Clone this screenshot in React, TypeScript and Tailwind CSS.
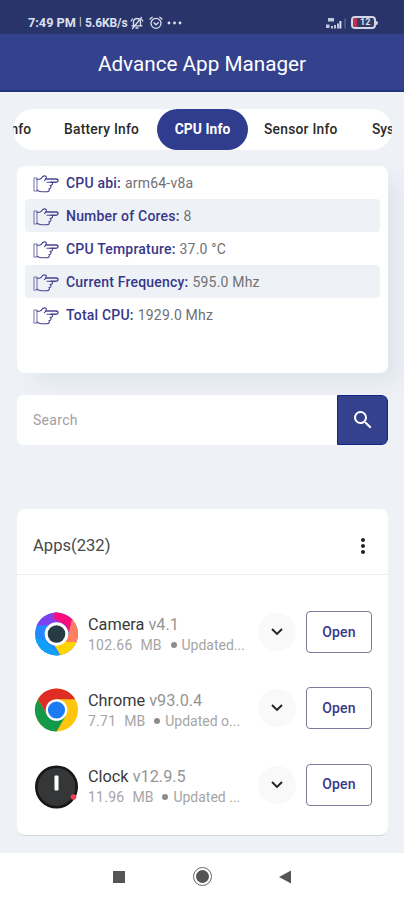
import { MdSearch, MdMoreVert } from "react-icons/md";

const stats = [
  { label: "CPU abi:", value: "arm64-v8a" },
  { label: "Number of Cores:", value: "8" },
  { label: "CPU Temprature:", value: "37.0 °C" },
  { label: "Current Frequency:", value: "595.0 Mhz" },
  { label: "Total CPU:", value: "1929.0 Mhz" },
];

const CameraIcon = () => (
  <svg viewBox="0 0 44 44" className="h-11 w-11 shrink-0">
    <defs>
      <clipPath id="camera-clip">
        <circle cx="22.5" cy="22" r="21.5" />
      </clipPath>
    </defs>
    <g clipPath="url(#camera-clip)">
      <rect width="44" height="44" fill="#2489ff" />
      <path d="M0 14L9 0H24L27 12L12 13Z" fill="#8140f0" />
      <path d="M20 0H42L36 22L31 13L20 7Z" fill="#fb0d80" />
      <path d="M38 7L44 4V31H25L34 24Z" fill="#ff8060" />
      <path d="M24 30H44V44H27L19 31Z" fill="#ffd500" />
      <path d="M0 24L12 30L27 44H0Z" fill="#10a0f8" />
    </g>
    <circle cx="22.5" cy="22" r="11.8" fill="#fff" />
    <circle cx="22.5" cy="22" r="8.8" fill="#263b43" />
  </svg>
);

const ChromeIcon = () => (
  <svg viewBox="0 0 44 44" className="h-11 w-11 shrink-0">
    <g transform="translate(0.5 0)">
      <circle cx="22" cy="22" r="21.5" fill="#fdc50c" />
      <path d="M3.4 11.2A21.5 21.5 0 0 1 40.6 11.2H22L12.7 27.4Z" fill="#df2c25" />
      <path d="M3.4 11.2A21.5 21.5 0 0 0 22 43.5L31.4 27.4H12.7Z" fill="#14994a" />
      <circle cx="22" cy="22" r="10.8" fill="#fff" />
      <circle cx="22" cy="22" r="8.6" fill="#1c7bf2" />
    </g>
  </svg>
);

const ClockIcon = () => (
  <svg viewBox="0 0 44 44" className="h-11 w-11 shrink-0">
    <circle cx="22.5" cy="22" r="20.2" fill="#353637" stroke="#171718" strokeWidth="2.6" />
    <rect x="20.5" y="10.5" width="4" height="15" rx="0.8" fill="#fff" />
    <circle cx="39.5" cy="32" r="2.8" fill="#fa3852" />
  </svg>
);

const apps = [
  { name: "Camera", version: "v4.1", size: "102.66", updated: "Updated...", icon: <CameraIcon /> },
  { name: "Chrome", version: "v93.0.4", size: "7.71", updated: "Updated o...", icon: <ChromeIcon /> },
  { name: "Clock", version: "v12.9.5", size: "11.96", updated: "Updated ...", icon: <ClockIcon /> },
];

const PointingHand = () => (
  <svg viewBox="0 0 26 18" className="h-[18px] w-[26px] shrink-0" fill="none" stroke="#484491" strokeWidth="1.1" strokeLinejoin="round" strokeLinecap="round">
    <path d="M1 3H4V16H1Z" strokeOpacity="0.7" />
    <path d="M4 4.2H6.5Q8.2 3.9 9.5 1.7Q11.3 0.3 13 1.3Q13.8 2 12.8 3.8" />
    <path d="M12.8 3.9H23Q25.4 4.2 24.9 5.9Q24.4 7.2 22.8 7.3H18" strokeWidth="1.5" />
    <path d="M12.8 4L11.5 5.6M14 7.3H18.6Q20.3 8.4 19 9.8Q18.7 10.5 17 10.6Q18.8 11.8 17.6 12.9Q17.2 13.6 15.8 13.7Q17.1 14.8 15.8 16Q15.1 16.7 13.7 16.7H8.5Q6 16.4 4 15.2" />
  </svg>
);

const StatusBar = () => (
  <div className="flex h-[34px] items-center bg-[#29346b] pr-[26px] pl-7 pt-[11px] text-[#dde0ee]">
    <span className="w-[51px] whitespace-nowrap text-[12.7px] font-bold">7:49 PM</span>
    <span className="w-[6px] text-[11px]">|</span>
    <span className="w-[45px] whitespace-nowrap text-[12px] font-bold tracking-[-0.1px]">5.6KB/s</span>
    <svg viewBox="0 0 14 14" className="h-[14px] w-[14px]" fill="none" stroke="currentColor" strokeWidth="1.3" strokeLinecap="round">
      <path d="M3.5 9.8V5.5Q4 2.5 7 2.5Q10 2.5 10.5 5.5V9.8M2 9.8H12M6 12H8M2.5 12.5L11.5 1.5M1.2 5L2.4 3M12.8 5L11.8 3.5" />
    </svg>
    <svg viewBox="0 0 14 14" className="ml-[5px] h-[14px] w-[14px]" fill="none" stroke="currentColor" strokeWidth="1.3" strokeLinecap="round">
      <circle cx="7" cy="7.3" r="5" />
      <path d="M1 3L3.2 1.2M13 3L10.8 1.2M5 6.8L7 8.8L9.3 6.8" />
    </svg>
    <svg viewBox="0 0 16 4" className="ml-[4px] h-1 w-4" fill="currentColor">
      <circle cx="2" cy="2" r="1.4" />
      <circle cx="7.5" cy="2" r="1.4" />
      <circle cx="13" cy="2" r="1.4" />
    </svg>
    <svg viewBox="0 0 22 14" className="ml-auto h-[14px] w-[22px]" fill="currentColor">
      <path d="M3 2H9V5.5H3ZM1 8.5H4.5V12H1ZM6 10H8V12.5H6ZM9 9H11V12.5H9ZM12 7.5H14V12.5H12Z" opacity="0.85" />
      <rect x="14.4" y="5" width="2" height="7.5" />
      <rect x="19" y="2.5" width="2" height="10" opacity="0.2" />
    </svg>
    <div className="ml-[4px] flex items-center">
      <div className="flex h-[13px] w-[25px] items-center overflow-hidden rounded-[4px] border-2 border-[#d3d6e6] bg-[#343c64]">
        <div className="h-full w-[4px] bg-[#c22f52]" />
        <span className="pl-[3px] text-[9px] leading-none font-bold">12</span>
      </div>
      <div className="h-1 w-[2px] rounded-r bg-[#d3d6e6]" />
    </div>
  </div>
);

const Tabs = () => (
  <div className="mr-3 ml-[13px] flex h-[41px] items-center overflow-hidden rounded-full bg-white text-[13.8px] font-medium whitespace-nowrap text-[#2a2a2a]">
    <div className="flex w-[18px] shrink-0 justify-end">
      <span>Info</span>
    </div>
    <span className="ml-[33px] w-[93px] shrink-0 tracking-[0.25px]">Battery Info</span>
    <div className="flex h-full w-[91px] shrink-0 items-center justify-center rounded-full bg-[#303c8d] font-bold tracking-[0.1px] text-white">
      CPU Info
    </div>
    <span className="ml-4 w-[108px] shrink-0 tracking-[0.25px]">Sensor Info</span>
    <span className="shrink-0">System</span>
  </div>
);

export default function App() {
  return (
    <div className="flex h-[900px] w-[404px] flex-col overflow-hidden bg-[#eef2f7] font-['Roboto',sans-serif]">
      <StatusBar />
      <header className="flex h-[58px] items-center justify-center border-b-2 border-[#213580] bg-[#34428e] pt-[5px] text-[20.7px] text-white">
        Advance App Manager
      </header>

      <main className="flex flex-1 flex-col pt-[17px]">
        <Tabs />

        <section className="mr-4 ml-[17px] mt-4 h-[207px] rounded-lg bg-white px-2 shadow-[14px_12px_22px_-2px_rgba(60,65,80,0.07)]">
          {stats.map((s) => (
            <div key={s.label} className="flex h-[33px] items-center rounded-sm pt-[2px] pl-2 text-[14px] tracking-[0.2px] even:bg-[#eef2f7]">
              <PointingHand />
              <span className="ml-[7px] font-medium text-[#38378a]">{s.label}</span>
              <span className="ml-1 text-[#707074]">{s.value}</span>
            </div>
          ))}
        </section>

        <div className="mr-4 ml-[17px] mt-[22px] flex h-[50px] overflow-hidden rounded-md bg-white">
          <div className="flex flex-1 items-center pl-4 text-[14px] tracking-[0.3px] text-[#a0a0a0]">Search</div>
          <button className="flex w-[51px] items-center justify-center rounded-r-md border border-[#152583] bg-[#34418d]">
            <MdSearch className="h-6 w-6 text-white" />
          </button>
        </div>

        <section className="mr-4 ml-[17px] mt-16 h-[327px] rounded-lg border-b border-[#d5d7dc] bg-white">
          <div className="flex h-[66px] items-center justify-between border-b border-[#ececee] pt-[10px] pr-[13px] pl-4 text-[16.6px] text-[#484848]">
            Apps(232)
            <MdMoreVert className="mb-[2px] h-6 w-6 text-[#222]" />
          </div>
          <div className="flex flex-col pt-[19px]">
            {apps.map((app) => (
              <div key={app.name} className="flex h-[76.3px] items-center pr-4 pl-[17px]">
                <div className="pt-1">{app.icon}</div>
                <div className="ml-[10px] w-[170px] pt-[5px] whitespace-nowrap">
                  <div className="text-[16.3px] leading-5 text-[#3a3a3a]">
                    {app.name} <span className="text-[#959595]">{app.version}</span>
                  </div>
                  <div className="flex items-center text-[14px] leading-5 text-[#a5a5a5]">
                    <span className="tracking-[0.25px]">{app.size}</span>
                    <span className="ml-2">MB</span>
                    <span className="mr-[5px] ml-[9px] h-[6px] w-[6px] rounded-full bg-[#8c8c8c]" />
                    <span>{app.updated}</span>
                  </div>
                </div>
                <div className="flex h-[38px] w-[38px] shrink-0 items-center justify-center rounded-full bg-[#f9f9f9]">
                  <svg viewBox="0 0 12 8" className="h-2 w-3" fill="none" stroke="#222" strokeWidth="1.9">
                    <path d="M1 1L6 6L11 1" />
                  </svg>
                </div>
                <button className="ml-auto h-[42px] w-[66px] shrink-0 rounded border border-[#7b7b9e] text-[14px] font-medium tracking-[0.2px] text-[#38378a]">
                  Open
                </button>
              </div>
            ))}
          </div>
        </section>
      </main>

      <nav className="flex h-[47px] items-center bg-white pl-[113px]">
        <div className="h-3 w-3 bg-[#555]" />
        <div className="ml-[68px] flex h-[19px] w-[19px] items-center justify-center rounded-full border border-[#666]">
          <div className="h-[13px] w-[13px] rounded-full bg-[#555]" />
        </div>
        <svg viewBox="0 0 12 14" className="ml-[67px] h-[14px] w-3">
          <path d="M0 7L12 0.5V13.5Z" fill="#555" />
        </svg>
      </nav>
    </div>
  );
}
